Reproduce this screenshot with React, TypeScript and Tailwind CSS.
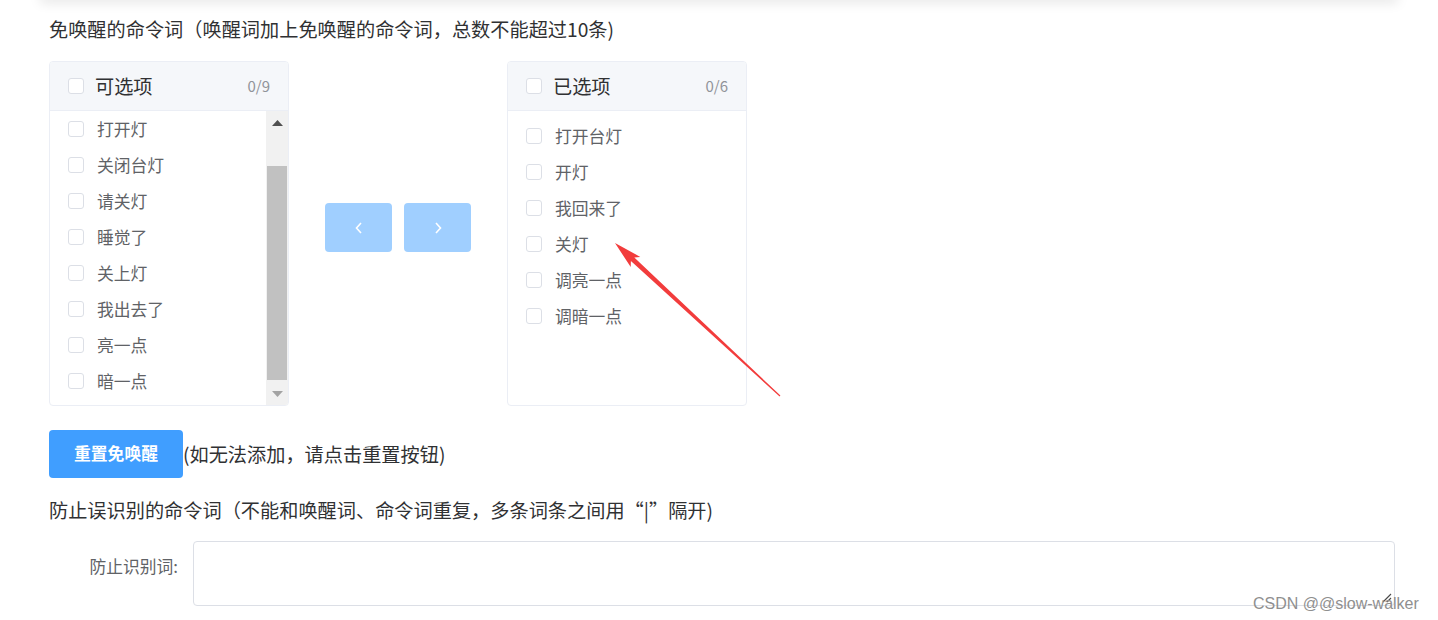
import React from 'react';

const leftItems = ['打开灯', '关闭台灯', '请关灯', '睡觉了', '关上灯', '我出去了', '亮一点', '暗一点'];
const rightItems = ['打开台灯', '开灯', '我回来了', '关灯', '调亮一点', '调暗一点'];

const Box: React.FC = () => (
  <span className="block w-[16px] h-[16px] shrink-0 rounded-[3px] border border-[#dcdfe6] bg-white" />
);

const PanelHeader: React.FC<{ title: string; count: string }> = ({ title, count }) => (
  <div className="h-[49px] shrink-0 flex items-center bg-[#f5f7fa] border-b border-[#ebeef5] pl-[18px] pr-[18px]">
    <Box />
    <span className="ml-[11px] text-[19.2px] leading-[24px] text-[#303133]">{title}</span>
    <span className="ml-auto text-[15px] text-[#909399]">{count}</span>
  </div>
);

const Row: React.FC<{ label: string }> = ({ label }) => (
  <div className="h-[36px] flex items-center pl-[18px]">
    <Box />
    <span className="ml-[13px] text-[16.8px] leading-[20px] text-[#606266]">{label}</span>
  </div>
);

const FakeScrollbar: React.FC = () => (
  <div className="w-[22px] shrink-0 flex flex-col bg-[#f1f1f1]">
    <div className="h-[21px] flex items-center justify-center pt-[4px]">
      <svg width="11" height="6" viewBox="0 0 11 6">
        <polygon points="5.5,0 11,6 0,6" fill="#505050" />
      </svg>
    </div>
    <div className="flex-1 flex flex-col pt-[35px] pb-[5px]">
      <div className="h-[214px] mx-[1px] bg-[#c1c1c1]" />
    </div>
    <div className="h-[21px] flex items-center justify-center pb-[3px]">
      <svg width="11" height="6" viewBox="0 0 11 6">
        <polygon points="0,0 11,0 5.5,6" fill="#a3a3a3" />
      </svg>
    </div>
  </div>
);

const Arrow: React.FC = () => (
  <svg className="absolute left-0 top-0 pointer-events-none" width="1438" height="620" viewBox="0 0 1438 620">
    <polygon
      points="615,243 640.3,256.9 634.3,257.5 780.4,395.6 779.6,396.4 630.9,261.1 630.7,267.1"
      fill="#f23c3c"
    />
  </svg>
);

export default function App() {
  return (
    <div className="relative w-[1438px] h-[620px] overflow-hidden bg-white font-['Noto_Sans_CJK_SC','Liberation_Sans',sans-serif]">
      {/* card above, only its shadow shows */}
      <div className="h-[10px] -mt-[10px] mx-[40px] bg-white shadow-[0_3px_12px_rgba(0,0,0,0.1)]" />

      <div className="pl-[49px] pr-[43px]">
        <div className="mt-[17px] text-[19.2px] leading-[24px] text-[#303133]">
          免唤醒的命令词（唤醒词加上免唤醒的命令词，总数不能超过10条)
        </div>

        <div className="mt-[20px] flex items-start">
          <div className="w-[240px] h-[345px] flex flex-col border border-[#ebeef5] rounded-[4px] overflow-hidden">
            <PanelHeader title="可选项" count="0/9" />
            <div className="flex-1 flex min-h-0">
              <div className="flex-1 overflow-hidden">
                {leftItems.map((t) => (
                  <Row key={t} label={t} />
                ))}
              </div>
              <FakeScrollbar />
            </div>
          </div>

          <div className="mx-[36px] mt-[142px] flex gap-[12px]">
            <button className="w-[67px] h-[49px] rounded-[4px] bg-[#a0cfff] flex items-center justify-center">
              <svg width="10" height="14" viewBox="0 0 10 14" fill="none">
                <path d="M7 2 L2.5 7 L7 12" stroke="white" strokeWidth="1.6" />
              </svg>
            </button>
            <button className="w-[67px] h-[49px] rounded-[4px] bg-[#a0cfff] flex items-center justify-center">
              <svg width="10" height="14" viewBox="0 0 10 14" fill="none">
                <path d="M3 2 L7.5 7 L3 12" stroke="white" strokeWidth="1.6" />
              </svg>
            </button>
          </div>

          <div className="w-[240px] h-[345px] flex flex-col border border-[#ebeef5] rounded-[4px] overflow-hidden">
            <PanelHeader title="已选项" count="0/6" />
            <div className="flex-1 pt-[7px]">
              {rightItems.map((t) => (
                <Row key={t} label={t} />
              ))}
            </div>
          </div>
        </div>

        <div className="mt-[24px] flex items-center">
          <button className="w-[134px] h-[48px] rounded-[4px] bg-[#409eff] text-white text-[16.8px] font-semibold">
            重置免唤醒
          </button>
          <span className="text-[19.2px] leading-[24px] text-[#303133]">(如无法添加，请点击重置按钮)</span>
        </div>

        <div className="mt-[20px] text-[19.2px] leading-[24px] text-[#303133]">
          防止误识别的命令词（不能和唤醒词、命令词重复，多条词条之间用“|”隔开)
        </div>

        <div className="mt-[19px] flex items-start">
          <label className="w-[144px] shrink-0 pr-[15px] text-right text-[16.8px] leading-[50px] text-[#606266]">
            防止识别词:
          </label>
          <div className="relative flex-1 flex">
            <textarea className="flex-1 h-[65px] resize-none border border-[#dcdfe6] rounded-[4px] px-[15px] py-[5px] text-[16px] outline-none" />
            {/* resize grip */}
            <svg className="absolute right-[3px] bottom-[3px]" width="10" height="10" viewBox="0 0 10 10">
              <path d="M9 1 L1 9 M9 5 L5 9" stroke="#4a4a4a" strokeWidth="1.1" />
            </svg>
          </div>
        </div>
      </div>

      <Arrow />

      <div className="absolute left-[1253px] top-[594px] text-[16px] leading-[20px] text-[#8f8f8f] font-['Liberation_Sans',sans-serif]">
        CSDN @@slow-walker
      </div>
    </div>
  );
}
